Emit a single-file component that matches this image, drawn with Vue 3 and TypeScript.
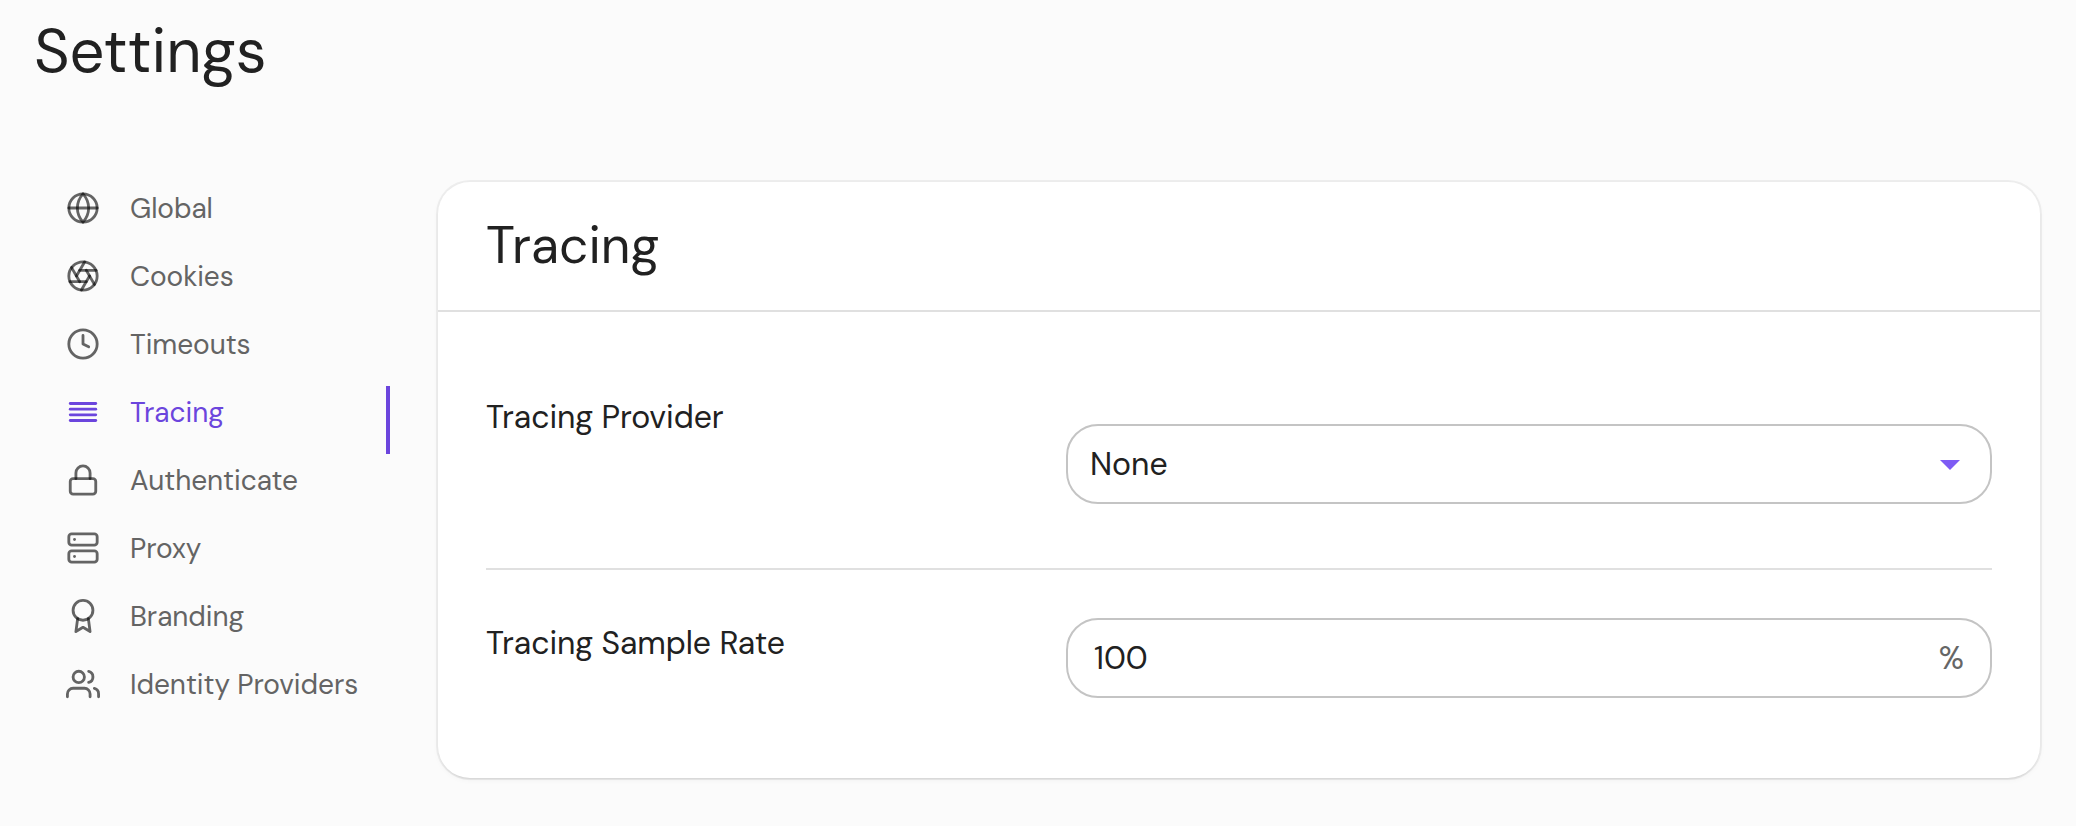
<script setup lang="ts">
type Shape = { tag: string; attrs: Record<string, string | number> }
type NavItem = { label: string; icon: Shape[]; active?: boolean }

const path = (d: string): Shape => ({ tag: 'path', attrs: { d } })
const circle = (cx: number, cy: number, r: number): Shape => ({ tag: 'circle', attrs: { cx, cy, r } })
const line = (x1: number, y1: number, x2: number, y2: number): Shape => ({ tag: 'line', attrs: { x1, y1, x2, y2 } })
const rect = (x: number, y: number, width: number, height: number): Shape => ({
  tag: 'rect',
  attrs: { x, y, width, height, rx: 2, ry: 2 },
})

const navItems: NavItem[] = [
  {
    label: 'Global',
    icon: [
      circle(12, 12, 10),
      line(2, 12, 22, 12),
      path('M12 2a15.3 15.3 0 0 1 4 10 15.3 15.3 0 0 1-4 10 15.3 15.3 0 0 1-4-10 15.3 15.3 0 0 1 4-10z'),
    ],
  },
  {
    label: 'Cookies',
    icon: [
      circle(12, 12, 10),
      line(14.31, 8, 20.05, 17.94),
      line(9.69, 8, 21.17, 8),
      line(7.38, 12, 13.12, 2.06),
      line(9.69, 16, 3.95, 6.06),
      line(14.31, 16, 2.83, 16),
      line(16.62, 12, 10.88, 21.94),
    ],
  },
  { label: 'Timeouts', icon: [circle(12, 12, 10), path('M12 6v6l4 2')] },
  {
    label: 'Tracing',
    active: true,
    icon: [line(3, 6, 21, 6), line(3, 10, 21, 10), line(3, 14, 21, 14), line(3, 18, 21, 18)],
  },
  { label: 'Authenticate', icon: [rect(3, 11, 18, 11), path('M7 11V7a5 5 0 0 1 10 0v4')] },
  {
    label: 'Proxy',
    icon: [rect(2, 2, 20, 8), rect(2, 14, 20, 8), line(6, 6, 6.01, 6), line(6, 18, 6.01, 18)],
  },
  { label: 'Branding', icon: [circle(12, 8, 7), path('M8.21 13.89L7 23l5-3 5 3-1.21-9.12')] },
  {
    label: 'Identity Providers',
    icon: [
      path('M17 21v-2a4 4 0 0 0-4-4H5a4 4 0 0 0-4 4v2'),
      circle(9, 7, 4),
      path('M23 21v-2a4 4 0 0 0-3-3.87'),
      path('M16 3.13a4 4 0 0 1 0 7.75'),
    ],
  },
]
</script>

<template>
  <main class="page">
    <h1 class="page-title">Settings</h1>
    <div class="layout">
      <nav class="nav">
        <a v-for="item in navItems" :key="item.label" class="nav-item" :class="{ active: item.active }">
          <svg class="nav-icon" viewBox="0 0 24 24">
            <component :is="shape.tag" v-for="(shape, i) in item.icon" :key="i" v-bind="shape.attrs" />
          </svg>
          <span class="nav-label">{{ item.label }}</span>
        </a>
      </nav>

      <section class="card">
        <header class="card-header"><h2 class="card-title">Tracing</h2></header>
        <div class="card-body">
          <div class="row row-provider">
            <label class="label label-provider">Tracing Provider</label>
            <div class="field select">
              <span>None</span>
              <svg class="caret" viewBox="0 0 20 10"><path d="M0 0h20L10 10z" /></svg>
            </div>
          </div>
          <div class="row row-rate">
            <label class="label label-rate">Tracing Sample Rate</label>
            <div class="field number">
              <span>100</span>
              <span class="unit">%</span>
            </div>
          </div>
        </div>
      </section>
    </div>
  </main>
</template>

<style>
body {
  margin: 0;
  background: #fbfbfb;
}
</style>

<style scoped>
.page {
  box-sizing: border-box;
  height: 826px;
  overflow: hidden;
  background: #fbfbfb;
  color: #212121;
  font-family: "DM Sans", "Open Sans", sans-serif;
}

.page-title {
  margin: 0;
  padding-left: 34px;
  font-size: 61.4px;
  font-weight: 400;
  line-height: 102px;
}

.layout {
  display: flex;
  align-items: flex-start;
  padding: 72px 36px 0 0;
}

.nav {
  display: flex;
  flex-direction: column;
  width: 390px;
  margin-right: 48px;
}

.nav-item {
  position: relative;
  display: flex;
  align-items: center;
  height: 68px;
  padding-left: 66px;
  color: #646464;
}

.nav-icon {
  flex: none;
  width: 34px;
  height: 34px;
  margin-right: 30px;
  fill: none;
  stroke: rgba(0, 0, 0, 0.6);
  stroke-width: 2;
  stroke-linecap: round;
  stroke-linejoin: round;
}

.nav-label {
  margin-top: 2px;
  font-size: 28px;
  line-height: 40px;
  letter-spacing: -0.05px;
  white-space: nowrap;
}

.active {
  color: #6b45dd;
}

.active .nav-icon {
  stroke: #6b45dd;
}

.active::after {
  content: "";
  position: absolute;
  top: 8px;
  right: 0;
  width: 4px;
  height: 68px;
  background: #6b45dd;
}

.card {
  flex: 1;
  margin-top: 8px;
  border-radius: 32px;
  background: #fff;
  box-shadow: 0 0 0 2px rgba(0, 0, 0, 0.05), 0 2px 2px -1px rgba(0, 0, 0, 0.09), 0 2px 6px rgba(0, 0, 0, 0.04);
}

.card-header {
  height: 128px;
  padding-left: 48px;
  border-bottom: 2px solid #e0e0e0;
}

.card-title {
  margin: 0;
  font-size: 51.5px;
  font-weight: 400;
  line-height: 128px;
}

.card-body {
  padding: 0 48px;
}

.row {
  box-sizing: border-box;
  display: grid;
  grid-template-columns: 580px 1fr;
  align-items: start;
}

.row-provider {
  height: 258px;
  padding-top: 112px;
  border-bottom: 2px solid #e0e0e0;
}

.row-rate {
  height: 208px;
  padding-top: 48px;
}

.label {
  font-size: 32px;
  line-height: 40px;
  letter-spacing: -0.07px;
}

.label-provider {
  margin-top: -27px;
}

.label-rate {
  margin-top: 5px;
}

.field {
  box-sizing: border-box;
  display: flex;
  align-items: center;
  justify-content: space-between;
  height: 80px;
  border: 2px solid #c4c4c4;
  border-radius: 32px;
  font-size: 32px;
  line-height: 40px;
}

.select {
  padding: 0 30px 0 22px;
}

.number {
  padding: 0 26px;
}

.unit {
  color: #666;
}

.caret {
  width: 20px;
  height: 10px;
  margin-top: 2px;
  fill: #7e5bf4;
}
</style>
